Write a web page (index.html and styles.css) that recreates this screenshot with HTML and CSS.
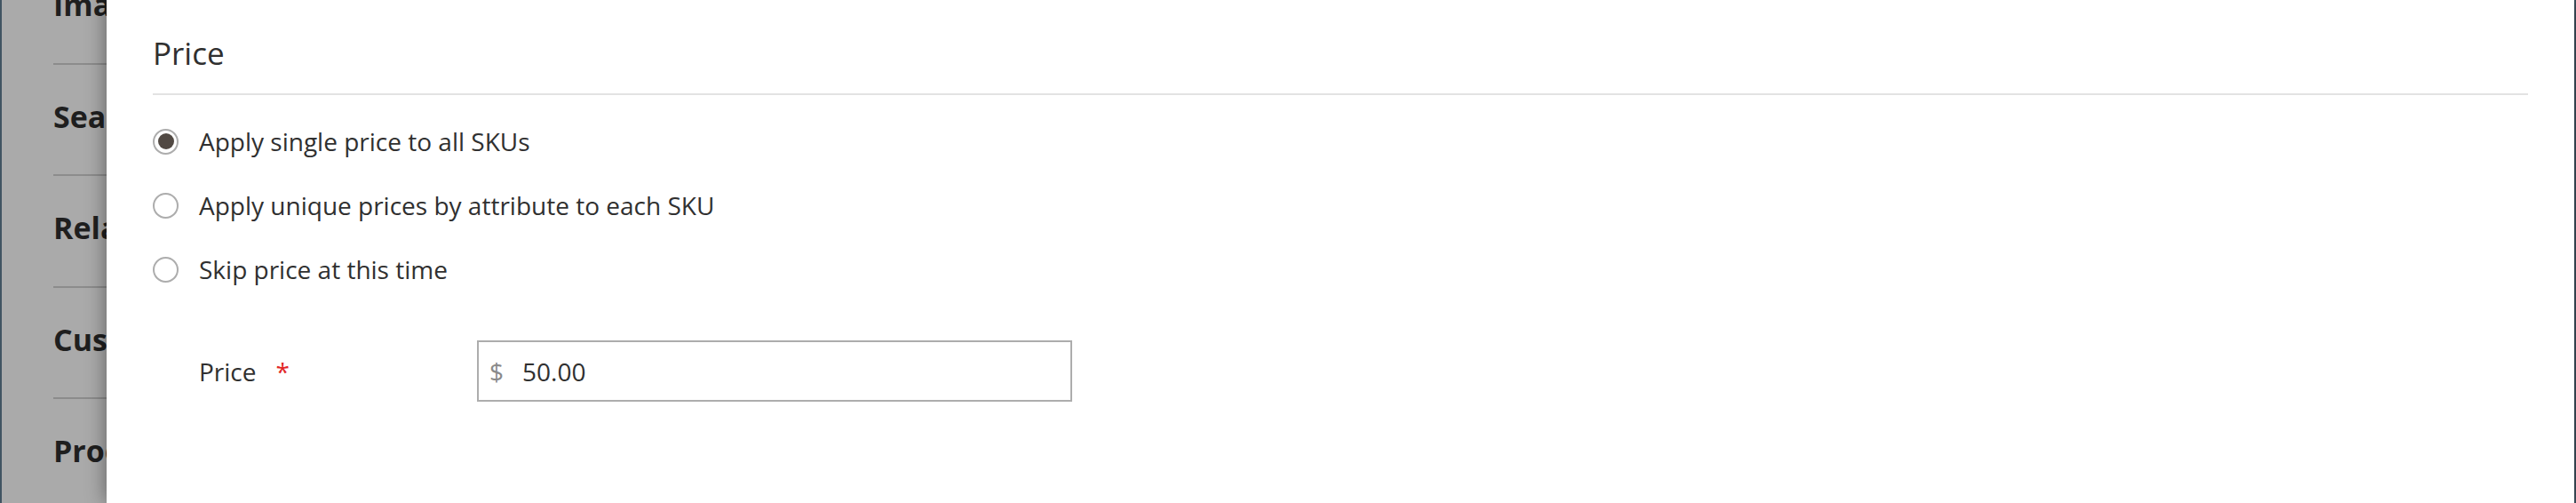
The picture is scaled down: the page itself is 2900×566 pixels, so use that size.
FILE: index.html
```html
<!DOCTYPE html>
<html lang="en">
<head>
<meta charset="utf-8">
<title>Price</title>
<link rel="stylesheet" href="styles.css">
</head>
<body>
<div class="screen">
  <div class="backdrop">
    <div class="bg-list">
      <div class="bg-item">Images And Videos</div>
      <div class="bg-item">Search Engine Optimization</div>
      <div class="bg-item">Related Products, Up-Sells, and Cross-Sells</div>
      <div class="bg-item">Customizable Options</div>
      <div class="bg-item">Product in Websites</div>
    </div>
  </div>
  <div class="modal">
    <h2 class="title">Price</h2>
    <div class="radios">
      <div class="radio-row"><span class="radio checked"></span><span class="radio-label">Apply single price to all SKUs</span></div>
      <div class="radio-row"><span class="radio"></span><span class="radio-label">Apply unique prices by attribute to each SKU</span></div>
      <div class="radio-row"><span class="radio"></span><span class="radio-label">Skip price at this time</span></div>
    </div>
    <div class="field">
      <div class="field-label"><span>Price</span><span class="req">*</span></div>
      <div class="input"><span class="addon">$</span><span class="value">50.00</span></div>
    </div>
  </div>
</div>
</body>
</html>
```

FILE: styles.css
```css
html, body {
  margin: 0;
  padding: 0;
  height: 566px;
  overflow: hidden;
  background: #415462;
}

.screen {
  display: flex;
  height: 566px;
  padding: 0 2px;
  font-family: "Open Sans", "Liberation Sans", sans-serif;
  color: #303030;
  overflow: hidden;
}

.backdrop {
  width: 118px;
  flex: 0 0 118px;
  background: #aaaaaa;
  overflow: hidden;
  padding-left: 58px;
  box-sizing: border-box;
}

.bg-list {
  margin-top: -53px;
  width: 60px;
}

.bg-item {
  padding-top: 38px;
  padding-bottom: 44.5px;
  border-bottom: 2px solid #8c8c8c;
  font-size: 34px;
  line-height: 41px;
  font-weight: 700;
  color: #1f1f1f;
  white-space: nowrap;
  overflow: hidden;
  text-overflow: clip;
}

.modal {
  flex: 1;
  background: #ffffff;
  padding: 0 52px;
  box-shadow: 0 0 22px rgba(0, 0, 0, 0.45);
  position: relative;
  z-index: 1;
}

.title {
  margin: 0;
  padding-top: 39px;
  padding-bottom: 24px;
  border-bottom: 2px solid #e3e3e3;
  font-size: 35px;
  line-height: 42px;
  font-weight: 400;
  color: #303030;
}

.radios {
  display: flex;
  flex-direction: column;
  gap: 32px;
  margin-top: 32px;
}

.radio-row {
  display: flex;
  align-items: center;
  gap: 23px;
  height: 40px;
  font-size: 28px;
}

.radio {
  width: 29px;
  height: 29px;
  box-sizing: border-box;
  border: 2px solid #adadad;
  border-radius: 50%;
  background: #ffffff;
  display: flex;
  align-items: center;
  justify-content: center;
}

.radio.checked::after {
  content: "";
  width: 18px;
  height: 18px;
  border-radius: 50%;
  background: #514943;
}

.field {
  display: flex;
  align-items: center;
  margin-top: 60px;
  padding-left: 52px;
}

.field-label {
  width: 313px;
  font-size: 28px;
  display: flex;
  align-items: center;
  gap: 22px;
}

.req {
  color: #e22626;
}

.input {
  width: 670px;
  height: 69px;
  box-sizing: border-box;
  border: 2px solid #adadad;
  display: flex;
  align-items: center;
  gap: 21px;
  padding-left: 12px;
  font-size: 28px;
}

.addon {
  color: #8a8a8a;
}

.value {
  color: #303030;
}
```
